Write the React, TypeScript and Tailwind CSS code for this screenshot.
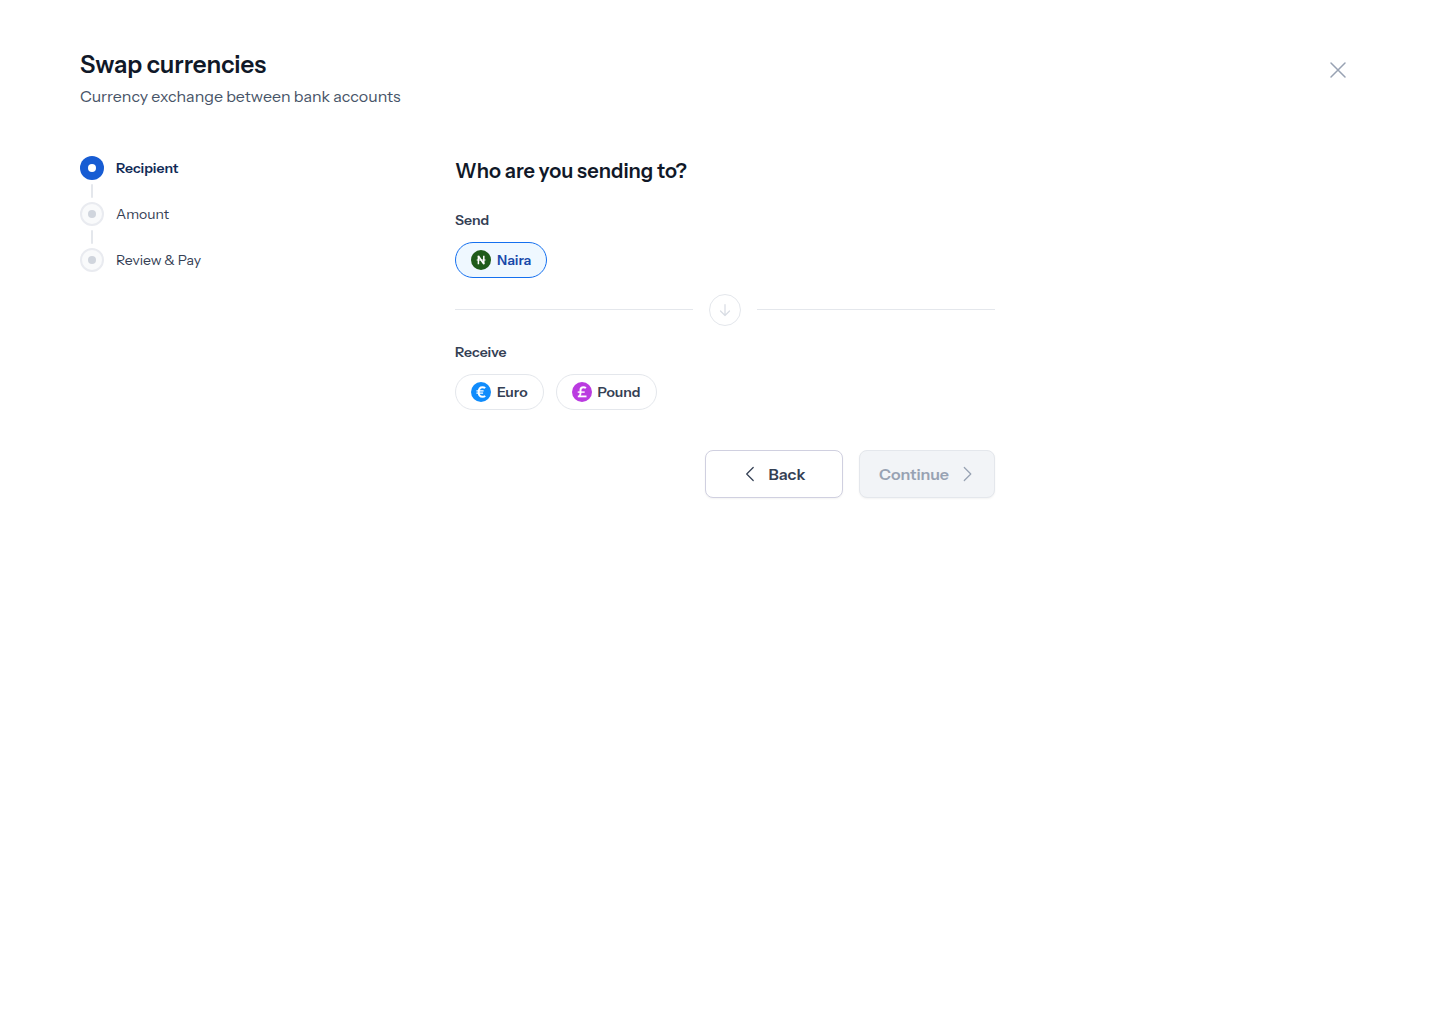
import { useState } from "react";
import type { ReactNode } from "react";

type Step = { label: string; current?: boolean };

const steps: Step[] = [
  { label: "Recipient", current: true },
  { label: "Amount" },
  { label: "Review & Pay" },
];

function NairaIcon() {
  return (
    <svg viewBox="0 0 20 20" className="size-5" aria-hidden="true">
      <circle cx="10" cy="10" r="10" fill="#1f5c1a" />
      <g fill="none" stroke="#fff">
        <path d="M7.4 14.2V5.8M12.8 14.2V5.8" strokeWidth="1.5" />
        <path d="M7.3 6L12.9 14" strokeWidth="1.7" />
        <path d="M5.7 10h8.8" strokeWidth="1" />
      </g>
    </svg>
  );
}

function EuroIcon() {
  return (
    <svg viewBox="0 0 20 20" className="size-5" aria-hidden="true">
      <circle cx="10" cy="10" r="10" fill="#108cfc" />
      <g fill="none" stroke="#fff">
        <path d="M14.2 6.2C13.5 5.5 12.5 5.2 11.5 5.2C9 5.2 7.7 7.2 7.7 10s1.3 4.8 3.8 4.8c1 0 2-.3 2.7-1" strokeWidth="1.9" />
        <path d="M5.4 8.8h7.2M5.4 11.2h6.7" strokeWidth="1.2" />
      </g>
    </svg>
  );
}

function PoundIcon() {
  return (
    <svg viewBox="0 0 20 20" className="size-5" aria-hidden="true">
      <circle cx="10" cy="10" r="10" fill="#ba3be0" />
      <g fill="none" stroke="#fff">
        <path d="M13.9 6.2C13.2 5.5 12.4 5.2 11.4 5.2C9.5 5.2 8.5 6.2 8.5 8V11c0 1.5-.4 2.5-1.2 3.2" strokeWidth="1.9" />
        <path d="M5.7 10.1h7" strokeWidth="1.4" />
        <path d="M5.8 14.4h8.7" strokeWidth="1.8" />
      </g>
    </svg>
  );
}

type CurrencyProps = {
  name: string;
  label: string;
  icon: ReactNode;
  checked: boolean;
  onSelect: () => void;
};

function CurrencyOption({ name, label, icon, checked, onSelect }: CurrencyProps) {
  return (
    <label className="relative flex h-9 cursor-pointer items-center gap-1.5 rounded-full border border-[#e4e7ec] bg-white px-[15px] text-sm font-semibold text-[#344054] has-checked:border-[#1570ef] has-checked:bg-[#eff8ff] has-checked:text-[#1849a9]">
      <input
        type="radio"
        name={name}
        value={label}
        checked={checked}
        onChange={onSelect}
        className="sr-only"
      />
      {icon}
      {label}
    </label>
  );
}

export default function App() {
  const [send, setSend] = useState("Naira");
  const [receive, setReceive] = useState("");

  return (
    <div className="min-h-screen bg-white px-20 pt-12 font-['Instrument_Sans',Inter,sans-serif] text-[#101828]">
      <header className="flex items-start justify-between">
        <div>
          <h1 className="text-2xl leading-[34px] font-semibold">Swap currencies</h1>
          <p className="mt-0.5 text-base leading-6 font-light text-[#475467]">
            Currency exchange between bank accounts
          </p>
        </div>
        <button type="button" aria-label="Close" className="mt-2.5 mr-2.5 size-6 cursor-pointer text-[#98a2b3]">
          <svg viewBox="0 0 24 24" className="size-6" fill="none" stroke="currentColor" strokeWidth="1.5" strokeLinecap="round">
            <path d="M5 5l14 14M19 5l-14 14" />
          </svg>
        </button>
      </header>

      <div className="mt-12 flex">
        <nav aria-label="Progress" className="w-[375px] shrink-0">
          <ol>
            {steps.map((step, i) => (
              <li key={step.label} aria-current={step.current ? "step" : undefined}>
                {i > 0 && <span className="my-1 ml-[11px] block h-3.5 w-0.5 rounded-full bg-[#e4e7ec]" />}
                <div className="flex items-center gap-3">
                  {step.current ? (
                    <span className="flex size-6 items-center justify-center rounded-full bg-[#175cd3]">
                      <span className="size-2 rounded-full bg-white" />
                    </span>
                  ) : (
                    <span className="flex size-6 items-center justify-center rounded-full border-2 border-[#e9ebf0] bg-[#f9fafb]">
                      <span className="size-2 rounded-full bg-[#d0d5dd]" />
                    </span>
                  )}
                  <span className={step.current ? "text-sm font-semibold text-[#102a56]" : "text-sm font-light text-[#344054]"}>
                    {step.label}
                  </span>
                </div>
              </li>
            ))}
          </ol>
        </nav>

        <main className="max-w-[540px] flex-1">
          <h2 className="text-xl leading-[30px] font-semibold">Who are you sending to?</h2>

          <fieldset className="mt-6">
            <legend className="text-sm font-semibold text-[#344054]">Send</legend>
            <div className="mt-3 flex gap-3">
              <CurrencyOption name="send" label="Naira" icon={<NairaIcon />} checked={send === "Naira"} onSelect={() => setSend("Naira")} />
            </div>
          </fieldset>

          <div className="mt-4 flex items-center gap-4">
            <span className="h-0.5 flex-1 border-t border-[#e4e7ec]" />
            <span className="flex size-8 items-center justify-center rounded-full border border-[#e4e7ec] text-[#d9dde4]">
              <svg viewBox="0 0 16 16" className="size-4" fill="none" stroke="currentColor" strokeWidth="1.25" strokeLinecap="round" strokeLinejoin="round" aria-hidden="true">
                <path d="M8 2.5v11M3.5 9L8 13.5L12.5 9" />
              </svg>
            </span>
            <span className="h-0.5 flex-1 border-t border-[#e4e7ec]" />
          </div>

          <fieldset className="mt-4">
            <legend className="text-sm font-semibold text-[#344054]">Receive</legend>
            <div className="mt-3 flex gap-3">
              <CurrencyOption name="receive" label="Euro" icon={<EuroIcon />} checked={receive === "Euro"} onSelect={() => setReceive("Euro")} />
              <CurrencyOption name="receive" label="Pound" icon={<PoundIcon />} checked={receive === "Pound"} onSelect={() => setReceive("Pound")} />
            </div>
          </fieldset>

          <div className="mt-10 flex justify-end gap-4">
            <button
              type="button"
              className="flex h-12 w-[138px] cursor-pointer items-center justify-center gap-2 rounded-lg border border-[#d0d0e0] bg-white pr-0.5 font-semibold text-[#344054] shadow-xs"
            >
              <svg viewBox="0 0 20 20" className="size-5" fill="none" stroke="currentColor" strokeWidth="1.25" strokeLinecap="round" strokeLinejoin="round" aria-hidden="true">
                <path d="M12.2 3.5L5.7 10l6.5 6.5" />
              </svg>
              Back
            </button>
            <button
              type="button"
              disabled={!receive}
              className="flex h-12 w-[136px] cursor-pointer items-center justify-center gap-2 rounded-lg border border-[#175cd3] bg-[#175cd3] pl-0.5 font-semibold text-white shadow-xs disabled:cursor-default disabled:border-[#e4e7ec] disabled:bg-[#f2f4f7] disabled:text-[#98a2b3]"
            >
              Continue
              <svg viewBox="0 0 20 20" className="size-5" fill="none" stroke="currentColor" strokeWidth="1.25" strokeLinecap="round" strokeLinejoin="round" aria-hidden="true">
                <path d="M7.3 3.5L13.8 10l-6.5 6.5" />
              </svg>
            </button>
          </div>
        </main>
      </div>
    </div>
  );
}
